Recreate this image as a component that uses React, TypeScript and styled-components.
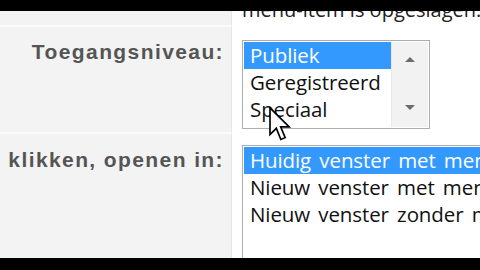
import React from 'react'
import styled, { createGlobalStyle } from 'styled-components'

const GlobalStyle = createGlobalStyle`
  html, body {
    margin: 0;
    padding: 0;
    background: #000;
    overflow: hidden;
  }
`

const ACCESS = ['Publiek', 'Geregistreerd', 'Speciaal']
const TARGETS = [
  'Huidig venster met menubalk',
  'Nieuw venster met menubalk',
  'Nieuw venster zonder menubalk',
]

const App = () => {
  return (
    <>
      <GlobalStyle />
      <Screen>
        <BlackBar />
        <Form>
          <LabelCell $h={16} />
          <FieldCell $h={16}>
            <Note>menu-item is opgeslagen.</Note>
          </FieldCell>

          <LabelCell $h={107} $pt={13}>
            <Label>Toegangsniveau:</Label>
          </LabelCell>
          <FieldCell $h={107} $pt={13}>
            <ListBox $w={188} $h={89}>
              <Options>
                {ACCESS.map((item, i) => (
                  <Option key={item} $selected={i === 0}>{item}</Option>
                ))}
              </Options>
              <Scrollbar>
                <Arrow viewBox="0 0 12 8">
                  <path d="M1 7 L6 2 L11 7 Z" fill="#6d6d6d" />
                </Arrow>
                <Arrow viewBox="0 0 12 8">
                  <path d="M1 1 L6 6 L11 1 Z" fill="#6d6d6d" />
                </Arrow>
              </Scrollbar>
            </ListBox>
          </FieldCell>

          <LabelCell $h={124} $pt={14} $last>
            <Label>klikken, openen in:</Label>
          </LabelCell>
          <FieldCell $h={124} $pt={11} $last>
            <ListBox $w={260} $h={130}>
              <Options>
                {TARGETS.map((item, i) => (
                  <Option key={item} $selected={i === 0}>{item}</Option>
                ))}
              </Options>
            </ListBox>
          </FieldCell>
        </Form>
        <BlackBar $h={12} />
        <Pointer viewBox="0 0 13 21">
          <path
            d="M0.5 0.5 L0.5 16.5 L4.3 12.8 L7 19.5 L9.6 18.4 L6.9 11.9 L12 11.9 Z"
            fill="#fff"
            stroke="#000"
            strokeWidth="1"
            strokeLinejoin="miter"
          />
        </Pointer>
      </Screen>
    </>
  )
}

export default App

const Screen = styled.div`
  position: relative;
  width: 480px;
  height: 270px;
  display: flex;
  flex-direction: column;
  overflow: hidden;
  background: #fff;
`

const BlackBar = styled.div<{ $h?: number }>`
  height: ${(p) => p.$h ?? 11}px;
  background: #000;
  flex: none;
`

const Form = styled.div`
  flex: 1;
  display: grid;
  grid-template-columns: 232px 1fr;
  overflow: hidden;
`

const LabelCell = styled.div<{ $h: number; $pt?: number; $last?: boolean }>`
  box-sizing: border-box;
  height: ${(p) => p.$h}px;
  padding: ${(p) => p.$pt ?? 0}px 7px 0 0;
  background: #f3f3f3;
  border-right: 1px solid #e6e6e6;
  border-bottom: ${(p) => (p.$last ? 'none' : '2px solid #fbfbfb')};
  display: flex;
  justify-content: flex-end;
  align-items: flex-start;
`

const FieldCell = styled.div<{ $h: number; $pt?: number; $last?: boolean }>`
  box-sizing: border-box;
  height: ${(p) => p.$h}px;
  padding: ${(p) => p.$pt ?? 0}px 0 0 10px;
  background: #fff;
  overflow: hidden;
  display: flex;
  align-items: flex-start;
`

const Note = styled.div`
  font-family: 'Open Sans', 'Noto Sans', sans-serif;
  font-size: 20px;
  line-height: 20px;
  margin-top: -11px;
  color: #222;
  white-space: nowrap;
`

const Label = styled.div`
  font-family: 'Liberation Sans', Arial, sans-serif;
  font-weight: bold;
  font-size: 21px;
  letter-spacing: 1.4px;
  line-height: 24px;
  color: #555;
  white-space: nowrap;
`

const ListBox = styled.div<{ $w: number; $h: number }>`
  box-sizing: border-box;
  flex: none;
  width: ${(p) => p.$w}px;
  height: ${(p) => p.$h}px;
  border: 1px solid #adadad;
  background: #fff;
  padding: 1px;
  display: flex;
`

const Options = styled.div`
  flex: 1;
  display: flex;
  flex-direction: column;
  overflow: hidden;
`

const Option = styled.div<{ $selected?: boolean }>`
  height: 27px;
  line-height: 27px;
  padding-left: 6px;
  font-family: 'Open Sans', 'Noto Sans', sans-serif;
  font-size: 20.5px;
  letter-spacing: -0.1px;
  word-spacing: 3px;
  white-space: nowrap;
  color: ${(p) => (p.$selected ? '#fff' : '#111')};
  background: ${(p) => (p.$selected ? '#3399ff' : 'transparent')};
`

const Scrollbar = styled.div`
  width: 36px;
  flex: none;
  background: #f2f2f2;
  border-left: 1px solid #e8e8e8;
  display: flex;
  flex-direction: column;
  justify-content: space-between;
  align-items: center;
  padding: 13px 0 15px;
`

const Arrow = styled.svg`
  width: 12px;
  height: 8px;
`

const Pointer = styled.svg`
  position: absolute;
  left: 269px;
  top: 107px;
  width: 22px;
  height: 35px;
`
